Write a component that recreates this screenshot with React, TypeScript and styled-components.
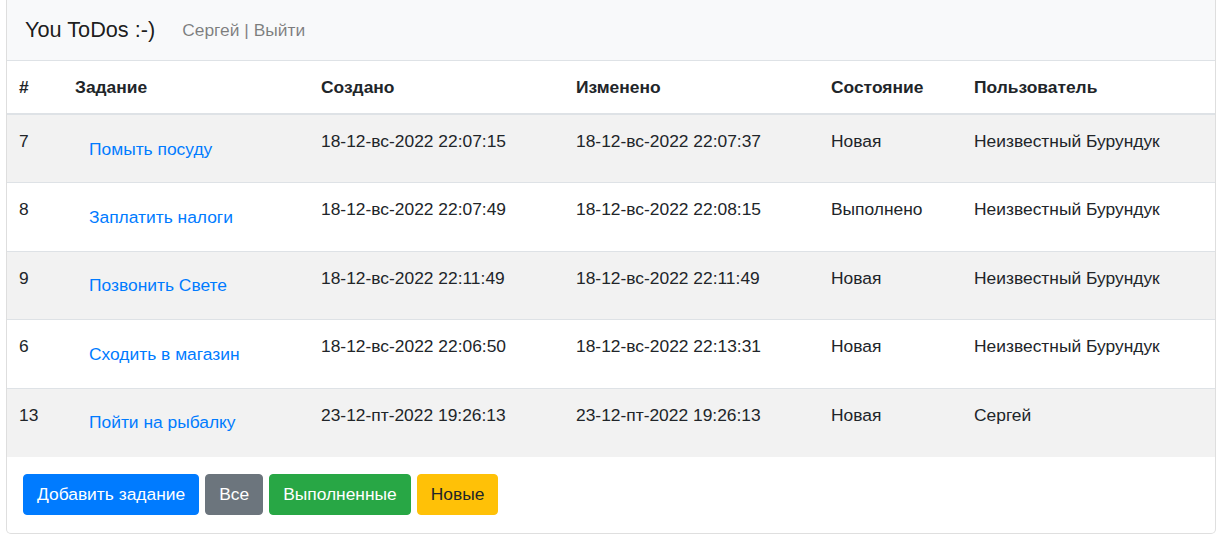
import React from "react";
import styled, { createGlobalStyle } from "styled-components";

const Global = createGlobalStyle`
  html, body { margin: 0; padding: 0; background: #fff; }
  body {
    font-family: "Liberation Sans", Arial, sans-serif;
    font-size: 17.4px;
    line-height: 26px;
    color: #212529;
  }
  * { box-sizing: border-box; }
`;

const Page = styled.div`
  padding: 0 7px 0 6px;
`;

const Card = styled.div`
  margin-top: -1px;
  border: 1px solid rgba(0, 0, 0, 0.125);
  border-top-color: transparent;
  border-radius: 0 0 5px 5px;
  overflow: hidden;
  background: #fff;
`;

const Header = styled.div`
  display: flex;
  align-items: center;
  height: 61px;
  padding: 0 18px;
  background: #f8f9fa;
  border-bottom: 1px solid #dee2e6;
`;

const Brand = styled.span`
  font-size: 21.7px;
  line-height: 32px;
  color: rgba(0, 0, 0, 0.9);
  margin-right: 27px;
`;

const NavText = styled.span`
  color: rgba(0, 0, 0, 0.5);
  font-size: 17.4px;
`;

const Table = styled.table`
  width: 100%;
  border-collapse: collapse;
  table-layout: fixed;
`;

const Th = styled.th<{ $w: number }>`
  width: ${(p) => p.$w}px;
  text-align: left;
  font-weight: bold;
  padding: 13px 12px;
  line-height: 26px;
  border-bottom: 2px solid #dee2e6;
`;

const Row = styled.tr<{ $striped: boolean }>`
  background: ${(p) => (p.$striped ? "#f2f2f2" : "#fff")};
`;

const Td = styled.td`
  padding: 13px 12px;
  height: 68.6px;
  vertical-align: top;
  border-top: 1px solid #dee2e6;
  line-height: 26px;
`;

const LinkBtn = styled.a`
  display: inline-block;
  padding: 6.5px 13px;
  border: 1px solid transparent;
  color: #007bff;
  text-decoration: none;
  line-height: 26px;
  cursor: pointer;
`;

const Footer = styled.div`
  display: flex;
  gap: 6px;
  padding: 17px 16px 18px;
`;

const variants = {
  primary: { bg: "#007bff", fg: "#fff" },
  secondary: { bg: "#6c757d", fg: "#fff" },
  success: { bg: "#28a745", fg: "#fff" },
  warning: { bg: "#ffc107", fg: "#212529" },
};

const Button = styled.button<{ $v: keyof typeof variants }>`
  font-family: inherit;
  font-size: 17.4px;
  line-height: 26px;
  padding: 6.5px 13px;
  border: 1px solid ${(p) => variants[p.$v].bg};
  background: ${(p) => variants[p.$v].bg};
  color: ${(p) => variants[p.$v].fg};
  border-radius: 4px;
  cursor: pointer;
`;

const cols = [
  { t: "#", w: 56 },
  { t: "Задание", w: 246 },
  { t: "Создано", w: 255 },
  { t: "Изменено", w: 255 },
  { t: "Состояние", w: 143 },
  { t: "Пользователь", w: 253 },
];

const rows = [
  ["7", "Помыть посуду", "18-12-вс-2022 22:07:15", "18-12-вс-2022 22:07:37", "Новая", "Неизвестный Бурундук"],
  ["8", "Заплатить налоги", "18-12-вс-2022 22:07:49", "18-12-вс-2022 22:08:15", "Выполнено", "Неизвестный Бурундук"],
  ["9", "Позвонить Свете", "18-12-вс-2022 22:11:49", "18-12-вс-2022 22:11:49", "Новая", "Неизвестный Бурундук"],
  ["6", "Сходить в магазин", "18-12-вс-2022 22:06:50", "18-12-вс-2022 22:13:31", "Новая", "Неизвестный Бурундук"],
  ["13", "Пойти на рыбалку", "23-12-пт-2022 19:26:13", "23-12-пт-2022 19:26:13", "Новая", "Сергей"],
];

export default function App() {
  return (
    <>
      <Global />
      <Page>
        <Card>
          <Header>
            <Brand>You ToDos :-)</Brand>
            <NavText>Сергей | Выйти</NavText>
          </Header>
          <Table>
            <thead>
              <tr>
                {cols.map((c) => (
                  <Th key={c.t} $w={c.w}>
                    {c.t}
                  </Th>
                ))}
              </tr>
            </thead>
            <tbody>
              {rows.map((r, i) => (
                <Row key={r[0]} $striped={i % 2 === 0}>
                  <Td>{r[0]}</Td>
                  <Td>
                    <LinkBtn>{r[1]}</LinkBtn>
                  </Td>
                  <Td>{r[2]}</Td>
                  <Td>{r[3]}</Td>
                  <Td>{r[4]}</Td>
                  <Td>{r[5]}</Td>
                </Row>
              ))}
            </tbody>
          </Table>
          <Footer>
            <Button $v="primary">Добавить задание</Button>
            <Button $v="secondary">Все</Button>
            <Button $v="success">Выполненные</Button>
            <Button $v="warning">Новые</Button>
          </Footer>
        </Card>
      </Page>
    </>
  );
}
